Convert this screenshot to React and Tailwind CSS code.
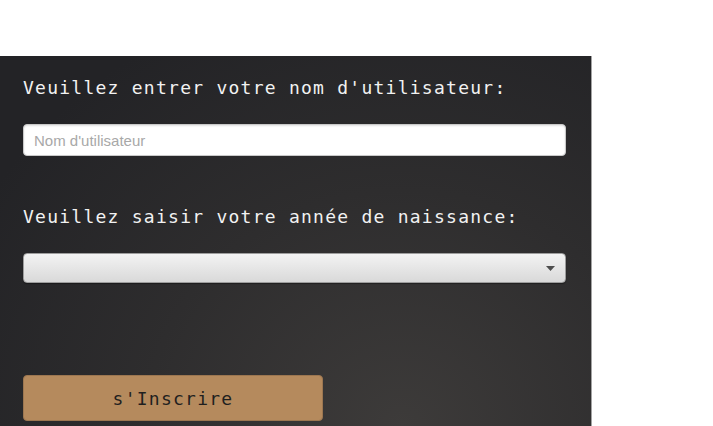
// Registration panel: username + birth year + submit
export default function App() {
  return (
    <div className="w-[713px] h-[426px] bg-white overflow-hidden">
      <div className="mt-[56px] h-[370px] w-[592px] border-r border-[#a3a3a3] bg-[radial-gradient(ellipse_at_68%_100%,#3d3b3a_0%,#2e2d2e_45%,#232326_85%)] pl-[23px] pt-[20px]">
        {/* Username */}
        <label className="block h-[24px] leading-[24px] font-['DejaVu_Sans_Mono','Liberation_Mono',monospace] text-[18px] tracking-[1.25px] text-[#f2f2f2]">
          Veuillez entrer votre nom d'utilisateur:
        </label>
        <input
          type="text"
          placeholder="Nom d'utilisateur"
          className="mt-[24px] block h-[32px] w-[543px] rounded-[4px] border border-[#c9c9c9] bg-white px-[10px] font-['Liberation_Sans',Arial,sans-serif] text-[15px] text-[#333] shadow-[inset_0_1px_2px_rgba(0,0,0,0.12)] outline-none placeholder:text-[#a8a8a8]"
        />

        {/* Birth year */}
        <label className="mt-[49px] block h-[24px] leading-[24px] font-['DejaVu_Sans_Mono','Liberation_Mono',monospace] text-[18px] tracking-[1.25px] text-[#f2f2f2]">
          Veuillez saisir votre année de naissance:
        </label>
        <div className="mt-[24px] flex h-[30px] w-[543px] items-center justify-end rounded-[4px] border border-[#9d9d9d] bg-gradient-to-b from-[#f3f3f3] to-[#d9d9d9] pr-[10px] shadow-[0_1px_1px_rgba(0,0,0,0.35)]">
          <svg width="9" height="5" viewBox="0 0 9 5">
            <path d="M0 0h9L4.5 5z" fill="#4d4d4d" />
          </svg>
        </div>

        {/* Submit */}
        <button className="mt-[92px] block h-[46px] w-[300px] rounded-[4px] border border-[#9c7650] bg-[#b58a5d] font-['DejaVu_Sans_Mono','Liberation_Mono',monospace] text-[18px] tracking-[1.25px] text-[#1f1f1f]">
          s'Inscrire
        </button>
      </div>
    </div>
  );
}
